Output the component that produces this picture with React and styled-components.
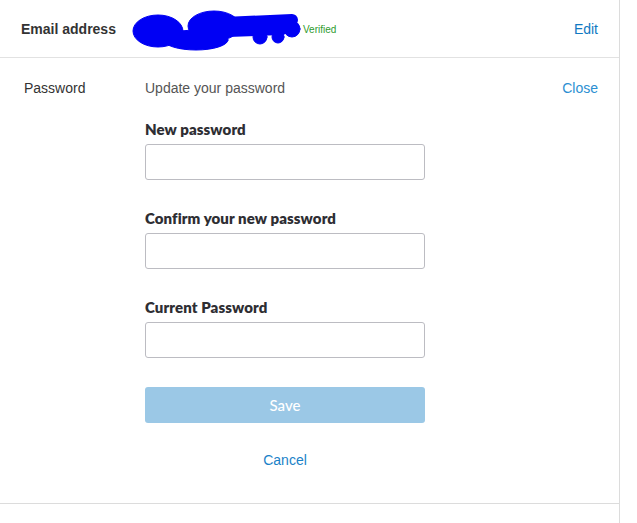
import React from "react";
import styled, { createGlobalStyle } from "styled-components";

const GlobalStyle = createGlobalStyle`
  body {
    margin: 0;
    background: #fff;
    font-family: "Liberation Sans", Arial, sans-serif;
  }
`;

const Panel = styled.div`
  width: 620px;
  min-height: 100vh;
  box-sizing: border-box;
  border-right: 1px solid #dcdcdc;
  background: #fff;
`;

const EmailRow = styled.div`
  display: flex;
  align-items: center;
  height: 57px;
  padding: 0 21px;
  border-bottom: 1px solid #e2e2e2;
`;

const RowTitle = styled.span`
  width: ${(p) => p.width}px;
  flex-shrink: 0;
  font-size: 14px;
  font-weight: ${(p) => (p.bold ? 700 : 400)};
  color: #333;
  line-height: 18px;
`;

const Verified = styled.span`
  margin-left: 1px;
  margin-top: 2px;
  font-size: 10px;
  color: #2f9b2f;
`;

const LinkText = styled.a`
  margin-left: auto;
  font-size: 14px;
  line-height: 18px;
  color: ${(p) => (p.light ? "#2c8fd2" : "#1079c2")};
  text-decoration: none;
  cursor: pointer;
`;

const PasswordSection = styled.div`
  display: grid;
  grid-template-columns: 121px 280px 1fr;
  padding: 21px 21px 34px 24px;
  border-bottom: 1px solid #dcdcdc;
`;

const Intro = styled.span`
  font-size: 14px;
  line-height: 18px;
  color: #555;
`;

const Form = styled.form`
  grid-column: 2;
  display: flex;
  flex-direction: column;
  margin-top: 23px;
`;

const Label = styled.label`
  font-family: Lato, "Liberation Sans", sans-serif;
  font-weight: 800;
  font-size: 15px;
  letter-spacing: 0.1px;
  line-height: 18px;
  color: #2e2e33;
  margin-bottom: 6px;
`;

const Input = styled.input`
  box-sizing: border-box;
  width: 280px;
  height: 36px;
  border: 1px solid #bcbcc2;
  border-radius: 3px;
  margin: 0 0 29px;
  padding: 0 10px;
  font-size: 14px;
`;

const SaveButton = styled.button`
  box-sizing: border-box;
  width: 280px;
  height: 36px;
  border: none;
  border-radius: 3px;
  background: #9bc8e6;
  color: #fff;
  font-family: Lato, "Liberation Sans", sans-serif;
  font-size: 15px;
  font-weight: 500;
`;

const Cancel = styled.a`
  align-self: center;
  margin-top: 28px;
  font-size: 14px;
  line-height: 18px;
  color: #1a82c8;
  cursor: pointer;
`;

const Redaction = () => (
  <svg width="170" height="44" viewBox="0 0 170 44">
    <g fill="#0000f4" stroke="#0000f4" strokeLinecap="round">
      <ellipse cx="26" cy="24" rx="25" ry="16" />
      <ellipse cx="82" cy="19" rx="26" ry="15" />
      <ellipse cx="64" cy="33" rx="32" ry="10" />
      <path d="M92 16 L160 13" strokeWidth="12" fill="none" />
      <path d="M96 25 L150 23" strokeWidth="10" fill="none" />
      <circle cx="128" cy="30" r="7" />
      <circle cx="146" cy="30" r="6" />
      <circle cx="160" cy="22" r="8" />
    </g>
  </svg>
);

const fields = ["New password", "Confirm your new password", "Current Password"];

export default function App() {
  return (
    <>
      <GlobalStyle />
      <Panel>
        <EmailRow>
          <RowTitle bold width={111}>Email address</RowTitle>
          <Redaction />
          <Verified>Verified</Verified>
          <LinkText>Edit</LinkText>
        </EmailRow>
        <PasswordSection>
          <RowTitle width={121}>Password</RowTitle>
          <Intro>Update your password</Intro>
          <LinkText light>Close</LinkText>
          <Form onSubmit={(e) => e.preventDefault()}>
            {fields.map((f) => (
              <React.Fragment key={f}>
                <Label>{f}</Label>
                <Input type="password" />
              </React.Fragment>
            ))}
            <SaveButton type="submit">Save</SaveButton>
            <Cancel>Cancel</Cancel>
          </Form>
        </PasswordSection>
      </Panel>
    </>
  );
}
